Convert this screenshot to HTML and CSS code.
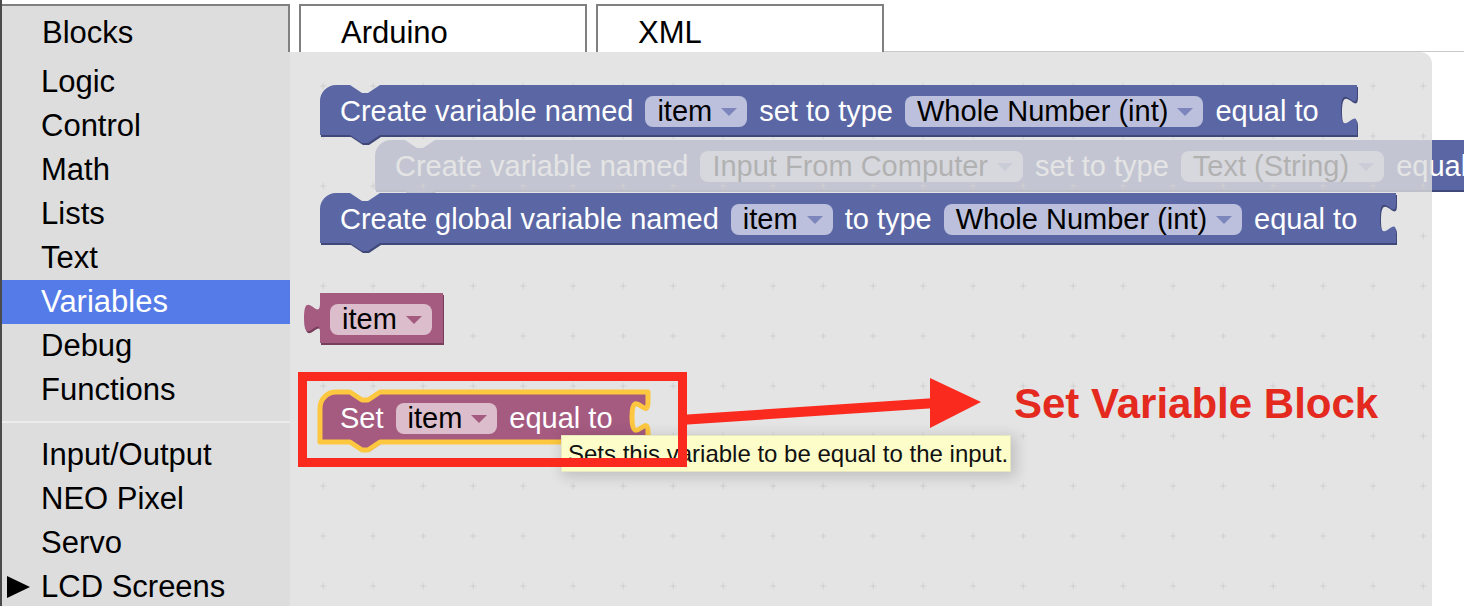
FILE: index.html
```html
<!DOCTYPE html>
<html>
<head>
<meta charset="utf-8">
<link rel="stylesheet" href="styles.css">
</head>
<body>
<div class="app">
  <div class="tabbar">
    <div class="tab tab-active">Blocks</div>
    <div class="tab">Arduino</div>
    <div class="tab">XML</div>
    <div class="tabbar-rest"></div>
  </div>
  <div class="main">
    <nav class="toolbox">
      <div class="cat">Logic</div>
      <div class="cat">Control</div>
      <div class="cat">Math</div>
      <div class="cat">Lists</div>
      <div class="cat">Text</div>
      <div class="cat cat-sel">Variables</div>
      <div class="cat">Debug</div>
      <div class="cat">Functions</div>
      <div class="sep"></div>
      <div class="cat">Input/Output</div>
      <div class="cat">NEO Pixel</div>
      <div class="cat">Servo</div>
      <div class="cat cat-tree"><span class="tri"></span>LCD Screens</div>
    </nav>
    <section class="ws">
      <!-- block in the main workspace, behind the flyout -->
      <div class="block blue b2">
        <svg class="shape" width="1170" height="62">
          <path class="dark" transform="translate(1,2)" d="M0,16 A16,16 0 0 1 16,0 H30 L42,8 H48 L60,0 H1166 V10 c0,20 -16,-16 -16,15 s16,-5 16,15 V50 H60 L48,58 H42 L30,50 H0 Z"/>
          <path class="fill" d="M0,16 A16,16 0 0 1 16,0 H30 L42,8 H48 L60,0 H1166 V10 c0,20 -16,-16 -16,15 s16,-5 16,15 V50 H60 L48,58 H42 L30,50 H0 Z"/>
        </svg>
        <div class="row">
          <span>Create variable named</span>
          <span class="field">Input From Computer<i class="arr"></i></span>
          <span>set to type</span>
          <span class="field">Text (String)<i class="arr"></i></span>
          <span>equal to</span>
        </div>
      </div>

      <div class="flyout">
        <svg class="grid" width="1142" height="560">
          <defs>
            <pattern id="gp" width="50" height="50" patternUnits="userSpaceOnUse" x="7.7" y="8.5">
              <path d="M22.5,25.5h6M25.5,22.5v6" stroke="#cfcfcf" stroke-width="1"/>
            </pattern>
          </defs>
          <rect width="1142" height="560" fill="url(#gp)"/>
        </svg>

        <div class="block blue b1">
          <svg class="shape" width="1041" height="62">
            <path class="dark" transform="translate(1,2)" d="M0,16 A16,16 0 0 1 16,0 H30 L42,8 H48 L60,0 H1037 V10 c0,20 -16,-16 -16,15 s16,-5 16,15 V50 H60 L48,58 H42 L30,50 H0 Z"/>
            <path class="fill" d="M0,16 A16,16 0 0 1 16,0 H30 L42,8 H48 L60,0 H1037 V10 c0,20 -16,-16 -16,15 s16,-5 16,15 V50 H60 L48,58 H42 L30,50 H0 Z"/>
          </svg>
          <div class="row">
            <span>Create variable named</span>
            <span class="field">item<i class="arr"></i></span>
            <span>set to type</span>
            <span class="field">Whole Number (int)<i class="arr"></i></span>
            <span>equal to</span>
          </div>
        </div>

        <div class="block blue b3">
          <svg class="shape" width="1080" height="62">
            <path class="dark" transform="translate(1,2)" d="M0,16 A16,16 0 0 1 16,0 H30 L42,8 H48 L60,0 H1076 V10 c0,20 -16,-16 -16,15 s16,-5 16,15 V50 H60 L48,58 H42 L30,50 H0 Z"/>
            <path class="fill" d="M0,16 A16,16 0 0 1 16,0 H30 L42,8 H48 L60,0 H1076 V10 c0,20 -16,-16 -16,15 s16,-5 16,15 V50 H60 L48,58 H42 L30,50 H0 Z"/>
          </svg>
          <div class="row">
            <span>Create global variable named</span>
            <span class="field">item<i class="arr"></i></span>
            <span>to type</span>
            <span class="field">Whole Number (int)<i class="arr"></i></span>
            <span>equal to</span>
          </div>
        </div>

        <div class="block pink bitem">
          <svg class="shape shape-out" width="145" height="56">
            <path class="dark" transform="translate(1,2)" d="M16,0 H139 V50 H16 Z M16,10 c0,20 -16,-16 -16,15 s16,-5 16,15 Z"/>
            <path class="fill" d="M16,0 H139 V50 H16 Z M16,10 c0,20 -16,-16 -16,15 s16,-5 16,15 Z"/>
          </svg>
          <div class="row row-rep">
            <span class="field">item<i class="arr"></i></span>
          </div>
        </div>

        <div class="block pink bset selected">
          <svg class="shape" width="334" height="64">
            <path class="dark" transform="translate(1,2)" d="M0,16 A16,16 0 0 1 16,0 H30 L42,8 H48 L60,0 H328 V10 c0,20 -16,-16 -16,15 s16,-5 16,15 V50 H60 L48,58 H42 L30,50 H0 Z"/>
            <path class="fill" d="M0,16 A16,16 0 0 1 16,0 H30 L42,8 H48 L60,0 H328 V10 c0,20 -16,-16 -16,15 s16,-5 16,15 V50 H60 L48,58 H42 L30,50 H0 Z"/>
          </svg>
          <div class="row">
            <span>Set</span>
            <span class="field">item<i class="arr"></i></span>
            <span>equal to</span>
          </div>
        </div>
      </div>

      <div class="tooltip">Sets this variable to be equal to the input.</div>
      <div class="redbox"></div>
      <svg class="arrow" width="320" height="70">
        <path d="M0,50 L256,33" stroke="#fb2a1f" stroke-width="10" fill="none"/>
        <polygon points="250,8 301,32 250,58" fill="#fb2a1f"/>
      </svg>
      <div class="note">Set Variable Block</div>
    </section>
  </div>
</div>
</body>
</html>
```

FILE: styles.css
```css
* { box-sizing: border-box; }

html, body {
  margin: 0;
  padding: 0;
  background: #fff;
}

body {
  font-family: "Liberation Sans", Arial, Helvetica, sans-serif;
  color: #000;
}

.app {
  width: 1464px;
  height: 606px;
  border-left: 2px solid #4a4a4a;
  display: flex;
  flex-direction: column;
  overflow: hidden;
}

/* ---------- tabs ---------- */
.tabbar {
  height: 52px;
  flex: none;
  display: flex;
  align-items: flex-end;
  gap: 9px;
}

.tab {
  width: 288px;
  height: 48px;
  border: 2px solid #808080;
  border-bottom: 0;
  background: #fff;
  padding: 9px 0 0 40px;
  font-size: 31px;
  line-height: 36px;
  white-space: nowrap;
}

.tab-active {
  background: #ddd;
  border-left: 0;
}

.tabbar-rest {
  flex: 1;
  align-self: stretch;
  margin-left: -9px;
  border-bottom: 1px solid #c9c9c9;
}

/* ---------- body ---------- */
.main {
  flex: 1;
  display: flex;
  min-height: 0;
}

.toolbox {
  width: 288px;
  flex: none;
  background: #ddd;
  padding-top: 8px;
}

.cat {
  height: 44px;
  line-height: 44px;
  padding-left: 39px;
  font-size: 31px;
  white-space: nowrap;
}

.cat-sel {
  background: #557be8;
  color: #fff;
}

.sep {
  height: 2px;
  margin: 9px 0 10px;
  background: #ececec;
}

.cat-tree {
  display: flex;
  align-items: center;
  gap: 11px;
  padding-left: 5px;
}

.tri {
  width: 0;
  height: 0;
  border-left: 23px solid #000;
  border-top: 11px solid transparent;
  border-bottom: 11px solid transparent;
}

/* ---------- workspace ---------- */
.ws {
  flex: 1;
  position: relative;
  background: #fff;
  overflow: hidden;
}

.flyout {
  position: absolute;
  left: 0;
  top: 0;
  width: 1142px;
  height: 560px;
  background: rgba(221, 221, 221, 0.8);
  border-top-right-radius: 12px;
  overflow: hidden;
}

.grid {
  position: absolute;
  left: 0;
  top: 0;
}

/* ---------- blocks ---------- */
.block {
  position: absolute;
  height: 50px;
}

.shape {
  position: absolute;
  left: 0;
  top: 0;
  overflow: visible;
}

.shape-out { left: -16px; }

.blue .fill { fill: #5b67a5; }
.blue .dark { fill: #3f4879; }
.pink .fill { fill: #a55b80; }
.pink .dark { fill: #783f5c; }

.selected .fill {
  stroke: #fdc83f;
  stroke-width: 5;
  stroke-linejoin: round;
}

.row {
  position: relative;
  height: 50px;
  display: flex;
  align-items: center;
  gap: 12px;
  padding: 2px 0 0 20px;
  color: #fff;
  font-size: 29px;
  white-space: nowrap;
}

.row-rep { padding-left: 10px; }

.field {
  display: inline-flex;
  align-items: center;
  gap: 9px;
  height: 31px;
  padding: 0 10px 0 12px;
  border-radius: 8px;
  color: #000;
  line-height: 31px;
}

.blue .field { background: #bcc0dd; }
.pink .field { background: #dbbdcc; }

.arr {
  width: 0;
  height: 0;
  border-left: 8px solid transparent;
  border-right: 8px solid transparent;
  border-top: 8px solid #7c86bd;
  margin-top: 2px;
}

.pink .arr { border-top-color: #a55b80; }

.b1 { left: 30px; top: 33px; width: 1037px; }
.b2 { left: 85px; top: 88px; width: 1166px; }
.b3 { left: 30px; top: 141px; width: 1076px; }
.bitem { left: 30px; top: 241px; width: 123px; }
.bset { left: 30px; top: 340px; width: 328px; }

/* ---------- annotations ---------- */
.tooltip {
  position: absolute;
  left: 271px;
  top: 383px;
  width: 450px;
  height: 37px;
  padding-left: 6px;
  background: #fdfdc9;
  border: 1px solid #e6e6c0;
  box-shadow: 3px 3px 14px 2px rgba(0, 0, 0, 0.16);
  font-size: 24px;
  line-height: 35px;
  color: #111;
  white-space: nowrap;
}

.redbox {
  position: absolute;
  left: 8px;
  top: 320px;
  width: 389px;
  height: 95px;
  border: 9px solid #fb2a1f;
}

.arrow {
  position: absolute;
  left: 390px;
  top: 318px;
  overflow: visible;
}

.note {
  position: absolute;
  left: 724px;
  top: 331px;
  font-size: 42px;
  line-height: 42px;
  font-weight: bold;
  color: #e4291e;
  white-space: nowrap;
}
```
